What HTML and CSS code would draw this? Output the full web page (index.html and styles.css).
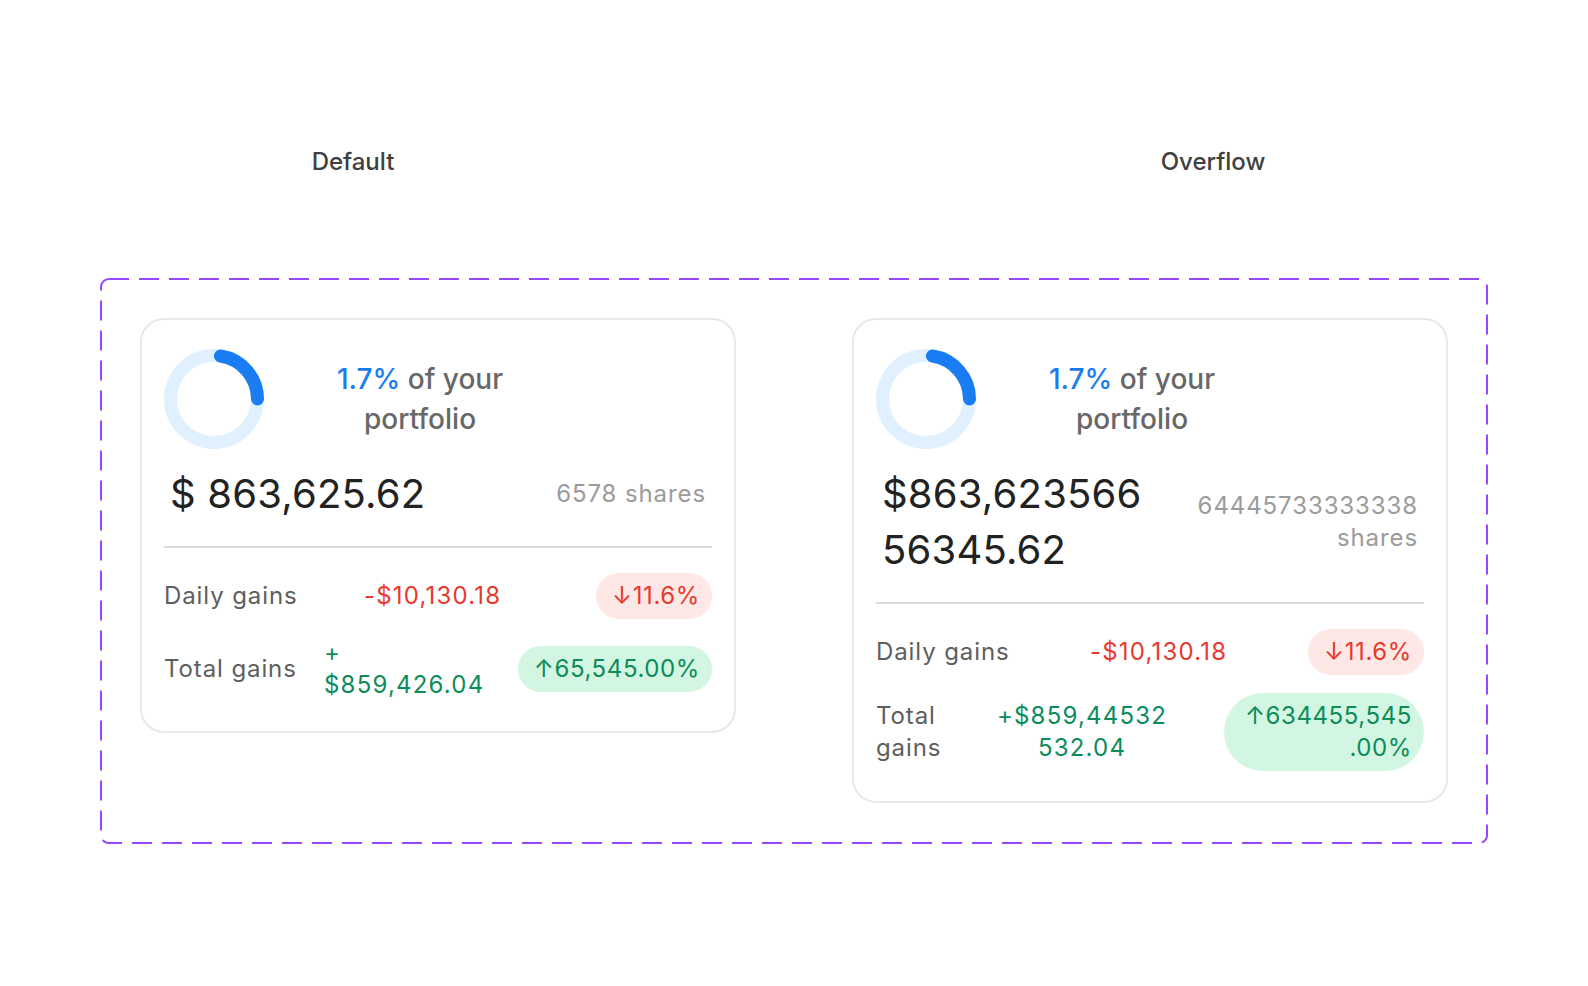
FILE: index.html
```html
<!DOCTYPE html>
<html lang="en">
<head>
    <meta charset="UTF-8">
    <meta name="viewport" content="width=device-width, initial-scale=1.0">
    <title>Holding card</title>
    <link rel="stylesheet" href="styles.css">
</head>
<body>
    <main class="page">
        <div class="variant-labels">
            <span class="variant-label">Default</span>
            <span class="variant-label">Overflow</span>
        </div>

        <div class="component-set">
            <svg class="component-set-border" aria-hidden="true"><rect></rect></svg>

            <!-- default -->
            <div class="card card-default">
                <div class="card-top">
                    <svg class="donut" viewBox="0 0 100 100">
                        <circle class="donut-track" cx="50" cy="50" r="43.5"></circle>
                        <path class="donut-value" d="M56.5 7 A43.5 43.5 0 0 1 93.5 50"></path>
                    </svg>
                    <p class="portfolio-share"><span class="share-pct">1.7%</span> of your <span>portfolio</span></p>
                </div>
                <div class="holding">
                    <div class="holding-value">$ 863,625.62</div>
                    <div class="holding-shares">6578 shares</div>
                </div>
                <hr class="divider">
                <div class="gains">
                    <div class="gains-row gains-daily">
                        <span class="gains-label">Daily gains</span>
                        <span class="gains-value loss">-$10,130.18</span>
                        <span class="pill pill-loss">↓11.6%</span>
                    </div>
                    <div class="gains-row gains-total">
                        <span class="gains-label">Total gains</span>
                        <span class="gains-value gain">+<wbr>$859,426.04</span>
                        <span class="pill pill-gain">↑65,545.00%</span>
                    </div>
                </div>
            </div>

            <!-- overflow -->
            <div class="card card-overflow">
                <div class="card-top">
                    <svg class="donut" viewBox="0 0 100 100">
                        <circle class="donut-track" cx="50" cy="50" r="43.5"></circle>
                        <path class="donut-value" d="M56.5 7 A43.5 43.5 0 0 1 93.5 50"></path>
                    </svg>
                    <p class="portfolio-share"><span class="share-pct">1.7%</span> of your <span>portfolio</span></p>
                </div>
                <div class="holding">
                    <div class="holding-value">$863,623566<wbr>56345.62</div>
                    <div class="holding-shares">64445733333338 shares</div>
                </div>
                <hr class="divider">
                <div class="gains">
                    <div class="gains-row gains-daily">
                        <span class="gains-label">Daily gains</span>
                        <span class="gains-value loss">-$10,130.18</span>
                        <span class="pill pill-loss">↓11.6%</span>
                    </div>
                    <div class="gains-row gains-total">
                        <span class="gains-label">Total gains</span>
                        <span class="gains-value gain">+$859,44532<wbr>532.04</span>
                        <span class="pill pill-gain">↑634455,545<wbr>.00%</span>
                    </div>
                </div>
            </div>
        </div>
    </main>
</body>
</html>
```

FILE: styles.css
```css
body {
    margin: 0;
    background: #fff;
    font-family: Inter, "Noto Sans", sans-serif;
    color: #222;
}
.page {
    padding: 146px 100px 60px;
}

/* variant names */
.variant-labels {
    display: flex;
    gap: 660px;
    padding-left: 153px;
    margin-bottom: 100px;
}
.variant-label {
    width: 200px;
    text-align: center;
    font-size: 24px;
    line-height: 32px;
    font-weight: 500;
    color: #404040;
}

/* dashed component set frame */
.component-set {
    position: relative;
    display: flex;
    align-items: flex-start;
    gap: 116px;
    padding: 40px 40px 41px;
}
.component-set-border {
    position: absolute;
    left: 0;
    top: 0;
    width: 100%;
    height: 100%;
    pointer-events: none;
}
.component-set-border rect {
    x: 1px;
    y: 1px;
    width: calc(100% - 2px);
    height: calc(100% - 2px);
    rx: 8px;
    fill: none;
    stroke: #9747ff;
    stroke-width: 2;
    stroke-dasharray: 20 10;
}

/* card */
.card {
    width: 596px;
    box-sizing: border-box;
    border: 2px solid #e8e8e8;
    border-radius: 24px;
    padding: 29px 22px 30px;
    background: #fff;
}
.card-top {
    display: flex;
    align-items: center;
}
.donut {
    flex: none;
    width: 100px;
    height: 100px;
}
.donut-track {
    fill: none;
    stroke: #e0f0fe;
    stroke-width: 13;
}
.donut-value {
    fill: none;
    stroke: #1a7cf2;
    stroke-width: 13;
    stroke-linecap: round;
}
.portfolio-share {
    margin: 0 0 0 36px;
    width: 240px;
    text-align: center;
    font-size: 28px;
    line-height: 40px;
    font-weight: 500;
    color: #676767;
}
.share-pct {
    color: #1a7cf2;
}

.holding {
    display: flex;
    align-items: center;
    justify-content: space-between;
    gap: 40px;
    margin-top: 17px;
    padding: 0 6px;
}
.holding-value {
    font-size: 40px;
    line-height: 56px;
    letter-spacing: 0.2px;
    color: #222;
}
.holding-shares {
    font-size: 24px;
    line-height: 32px;
    letter-spacing: 0.9px;
    color: #9b9b9b;
    text-align: right;
}
.card-overflow .holding-value {
    flex: none;
    width: 275px;
}

.divider {
    margin: 24px 0 25px;
    height: 2px;
    border: 0;
    background: #dadada;
}

/* gains rows */
.gains {
    display: flex;
    flex-direction: column;
    gap: 18px;
}
.gains-row {
    display: flex;
    align-items: center;
    font-size: 24px;
    line-height: 32px;
}
.gains-label {
    flex: none;
    letter-spacing: 0.9px;
    color: #5e5e5e;
}
.gains-value {
    flex: none;
    letter-spacing: 1.2px;
}
.loss {
    color: #e8392c;
}
.gain {
    color: #0b8c59;
}
.pill {
    margin-left: auto;
    padding: 7px 12px 7px 16px;
    border-radius: 999px;
    letter-spacing: 0.6px;
    text-align: right;
}
.pill-loss {
    background: #fde8e6;
    color: #e8392c;
}
.pill-gain {
    background: #d2f6e1;
    color: #0b8c59;
}

.card-default .gains-daily .gains-label {
    width: 200px;
}
.card-default .gains-total .gains-label {
    width: 160px;
}
.card-default .gains-total .gains-value {
    width: 164px;
}
.card-overflow .gains-daily .gains-label {
    width: 214px;
}
.card-overflow .gains-total .gains-label {
    width: 118px;
}
.card-overflow .gains-total .gains-value {
    width: 176px;
    text-align: center;
}
.card-overflow .gains-total .pill {
    width: 200px;
    box-sizing: border-box;
}
```
